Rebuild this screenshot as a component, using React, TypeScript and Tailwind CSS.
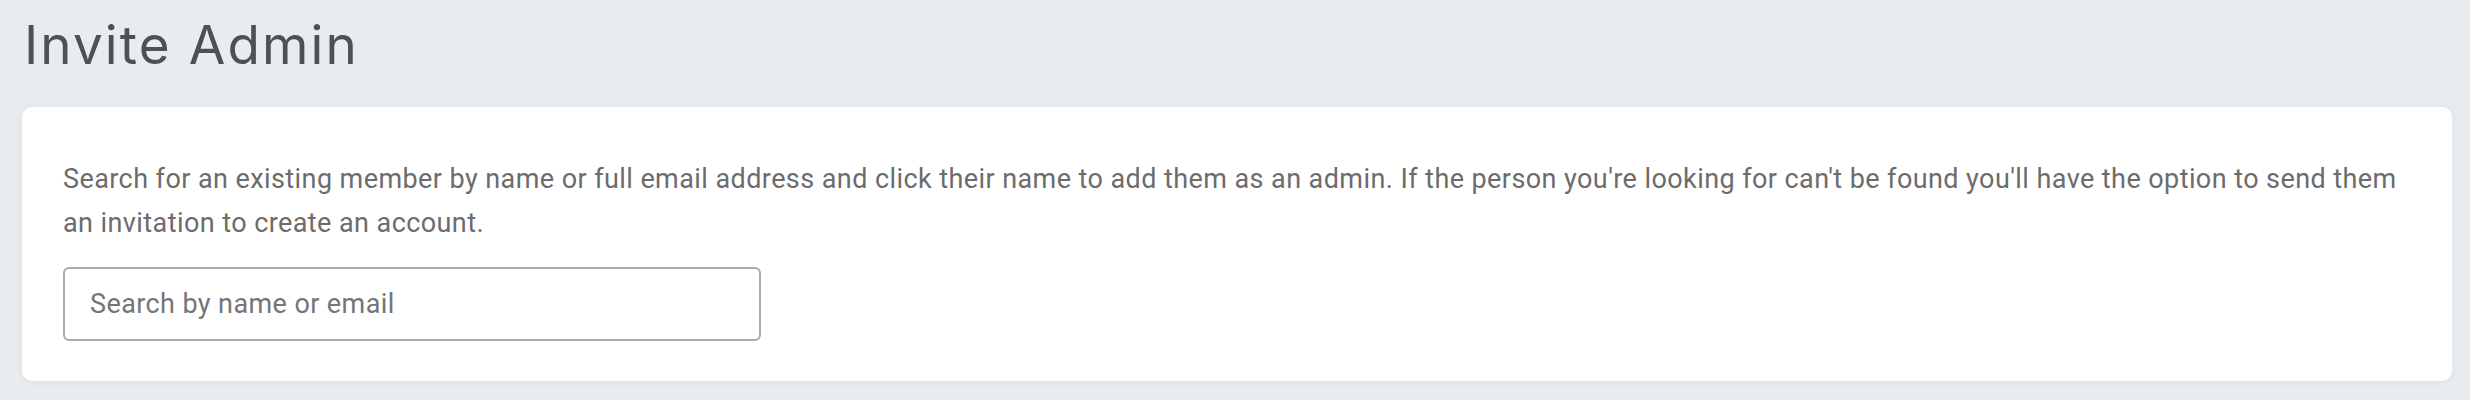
export default function App() {
  return (
    <div className="min-h-[400px] w-full bg-[#e9ecef] pt-[14px] pb-[19px]">
      <h1 className="ml-[24px] font-['Inter','Open_Sans',sans-serif] text-[53px] leading-[62px] tracking-[2.1px] text-[#4d5156]">
        Invite Admin
      </h1>
      <div className="ml-[22px] mr-[18px] mt-[31px] flex flex-col gap-[22px] rounded-[10px] bg-white pl-[41px] pr-[26px] pt-[50px] pb-[40px] shadow-[0_1px_6px_rgba(0,0,0,0.06)]">
        <p className="font-['Roboto','Liberation_Sans',sans-serif] text-[27px] leading-[44px] tracking-[0.42px] text-[#6c6c6c]">
          Search for an existing member by name or full email address and click their name to add them as an admin. If the person you're looking for can't be found you'll have the option to send them an invitation to create an account.
        </p>
        <input
          type="text"
          placeholder="Search by name or email"
          className="block h-[74px] w-[698px] rounded-[6px] border-2 border-[#a9a9a9] bg-white px-[25px] font-['Roboto','Liberation_Sans',sans-serif] text-[27px] tracking-[0.4px] text-[#6c6c6c] outline-none placeholder:text-[#757575]"
        />
      </div>
    </div>
  );
}
